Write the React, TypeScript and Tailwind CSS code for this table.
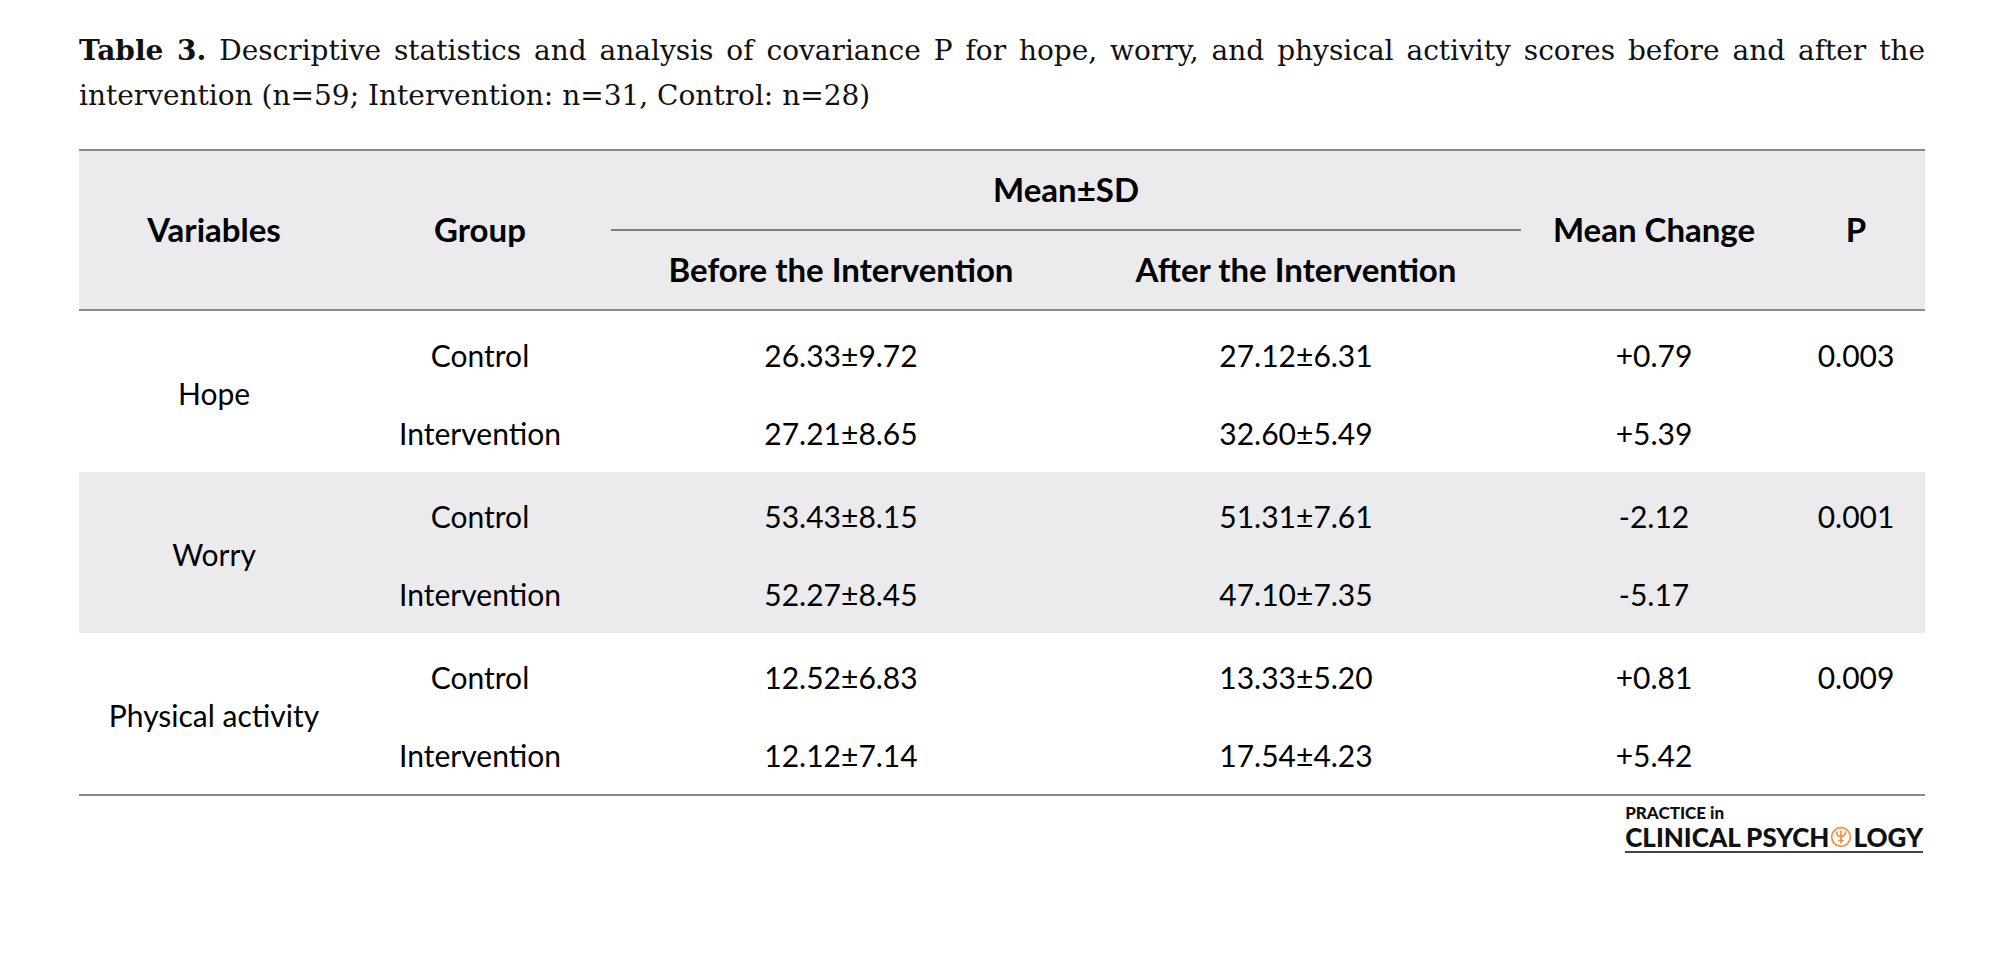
const cols = 'grid grid-cols-[270px_262px_460px_450px_266px_138px]';

const sections = [
  {
    name: 'Hope',
    shaded: false,
    p: '0.003',
    rows: [
      ['Control', '26.33±9.72', '27.12±6.31', '+0.79'],
      ['Intervention', '27.21±8.65', '32.60±5.49', '+5.39'],
    ],
  },
  {
    name: 'Worry',
    shaded: true,
    p: '0.001',
    rows: [
      ['Control', '53.43±8.15', '51.31±7.61', '-2.12'],
      ['Intervention', '52.27±8.45', '47.10±7.35', '-5.17'],
    ],
  },
  {
    name: 'Physical activity',
    shaded: false,
    p: '0.009',
    rows: [
      ['Control', '12.52±6.83', '13.33±5.20', '+0.81'],
      ['Intervention', '12.12±7.14', '17.54±4.23', '+5.42'],
    ],
  },
];

function Cell({ children, className = '' }: { children?: React.ReactNode; className?: string }) {
  return <div className={`flex items-center justify-center ${className}`}>{children}</div>;
}

function LogoIcon() {
  return (
    <svg width="22" height="22" viewBox="0 0 24 24" fill="none" stroke="#ec8f3a" strokeWidth="1.8" strokeLinecap="round" className="mx-[1px]">
      <circle cx="12" cy="12" r="10.2" />
      <path d="M7.2 6.5 Q7.2 11.5 12 11.5 Q16.8 11.5 16.8 6.5" />
      <path d="M12 5.5 V18.5" />
      <path d="M9.6 15.8 H14.4" />
    </svg>
  );
}

export default function App() {
  return (
    <div className="w-[2000px] h-[956px] bg-white text-black">
      <div className="pl-[79px] pt-[28px] w-[1925px]">
        {/* caption */}
        <div className="font-['DejaVu_Serif',serif] text-[28px] leading-[45px] text-[#111]">
          <div className="text-justify [text-align-last:justify]">
            <span className="font-bold">Table 3.</span> Descriptive statistics and analysis of covariance P for hope, worry, and physical activity scores before and after the
          </div>
          <div>intervention (n=59; Intervention: n=31, Control: n=28)</div>
        </div>

        {/* table */}
        <div className="mt-[31px] font-['Lato',sans-serif]">
          <div className={`${cols} grid-rows-[80px_78px] bg-[#ebebed] border-y-2 border-[#8a8a8a] font-bold text-[33px]`}>
            <Cell className="row-span-2">Variables</Cell>
            <Cell className="row-span-2">Group</Cell>
            <Cell className="col-span-2 border-b-2 border-[#7d7d7d]">Mean±SD</Cell>
            <Cell className="row-span-2">Mean Change</Cell>
            <Cell className="row-span-2">P</Cell>
            <Cell>Before the Intervention</Cell>
            <Cell>After the Intervention</Cell>
          </div>

          <div className="border-b-2 border-[#8a8a8a] text-[30px]">
            {sections.map((s) => (
              <div key={s.name} className={`${cols} grid-rows-[80px_77px] pt-[4px] ${s.shaded ? 'bg-[#ebebed]' : ''}`}>
                <Cell className="row-span-2">{s.name}</Cell>
                {s.rows.map((r, i) => (
                  <div key={i} className="contents">
                    {r.map((v, j) => (
                      <Cell key={j}>{v}</Cell>
                    ))}
                    <Cell>{i === 0 ? s.p : ''}</Cell>
                  </div>
                ))}
              </div>
            ))}
          </div>
        </div>

        {/* journal logo */}
        <div className="flex justify-end mt-[7px] pr-[2px]">
          <div className="flex flex-col border-b-2 border-[#444] font-['Lato',sans-serif] font-black text-[#111]">
            <div className="text-[17px] leading-[20px]">PRACTICE in</div>
            <div className="flex items-center text-[26px] leading-[28px]">
              CLINICAL PSYCH
              <LogoIcon />
              LOGY
            </div>
          </div>
        </div>
      </div>
    </div>
  );
}
